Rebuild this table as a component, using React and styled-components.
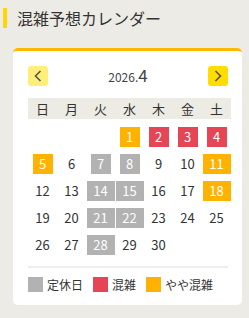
import styled, { createGlobalStyle } from "styled-components";

const GlobalStyle = createGlobalStyle`
  body {
    margin: 0;
    background: #edebe6;
    font-family: "Noto Sans CJK JP", "Noto Sans", sans-serif;
    color: #333;
  }
`;

const WEEK = ["日", "月", "火", "水", "木", "金", "土"];

// status: c = closed, b = busy, m = moderately busy
const STATUS = {
  1: "m", 2: "b", 3: "b", 4: "b",
  5: "m", 7: "c", 8: "c", 11: "m",
  14: "c", 15: "c", 18: "m",
  21: "c", 22: "c", 28: "c",
};

const COLORS = {
  c: "#b2b2b2",
  b: "#e64556",
  m: "#ffb300",
};

const FIRST_WEEKDAY = 3;
const DAYS = 30;

const Calendar = () => {
  const cells = [];
  for (let i = 0; i < FIRST_WEEKDAY; i++) cells.push(null);
  for (let d = 1; d <= DAYS; d++) cells.push(d);

  return (
    <>
      <GlobalStyle />
      <Title>混雑予想カレンダー</Title>
      <Card>
        <Nav>
          <NavButton $strong={false} aria-label="prev">
            <svg width="8" height="12" viewBox="0 0 8 12">
              <path d="M6.5 1 L1.5 6 L6.5 11" fill="none" stroke="#555" strokeWidth="1.6" />
            </svg>
          </NavButton>
          <Month>
            <Year>2026.</Year>4
          </Month>
          <NavButton $strong aria-label="next">
            <svg width="8" height="12" viewBox="0 0 8 12">
              <path d="M1.5 1 L6.5 6 L1.5 11" fill="none" stroke="#555" strokeWidth="1.6" />
            </svg>
          </NavButton>
        </Nav>
        <WeekRow>
          {WEEK.map((w) => (
            <WeekCell key={w}>{w}</WeekCell>
          ))}
        </WeekRow>
        <Days>
          {cells.map((d, i) => (
            <DayCell key={i}>
              {d && (
                <Day $bg={COLORS[STATUS[d]]} $wide={d > 9}>
                  {d}
                </Day>
              )}
            </DayCell>
          ))}
        </Days>
        <Divider />
        <Legend>
          <LegendItem>
            <Swatch $bg={COLORS.c} />定休日
          </LegendItem>
          <LegendItem>
            <Swatch $bg={COLORS.b} />混雑
          </LegendItem>
          <LegendItem>
            <Swatch $bg={COLORS.m} />やや混雑
          </LegendItem>
        </Legend>
      </Card>
    </>
  );
};

const Title = styled.h2`
  margin: 8px 0 0 3px;
  padding-left: 10px;
  border-left: 4px solid #ffd600;
  height: 20px;
  line-height: 20px;
  font-size: 16px;
  font-weight: normal;
  color: #333;
`;

const Card = styled.div`
  margin: 20px 7px 0 13px;
  background: #fff;
  border-top: 3px solid #ffb800;
  border-radius: 5px;
  padding: 15px 11px 13px 15px;
`;

const Nav = styled.div`
  display: flex;
  align-items: flex-end;
  justify-content: space-between;
  width: 200px;
  height: 20px;
  margin-bottom: 12px;
`;

const NavButton = styled.button`
  display: flex;
  align-items: center;
  justify-content: center;
  width: 20px;
  height: 20px;
  padding: 0;
  border: none;
  border-radius: 3px;
  background: ${(p) => (p.$strong ? "#ffdd00" : "#ffee77")};
`;

const Month = styled.div`
  font-size: 17px;
  line-height: 17px;
  color: #444;
  margin-bottom: 1px;
`;

const Year = styled.span`
  font-size: 12px;
`;

const WeekRow = styled.div`
  display: grid;
  grid-template-columns: repeat(7, 29px);
  height: 21px;
  background: #ecebe4;
`;

const WeekCell = styled.div`
  text-align: center;
  font-size: 13px;
  line-height: 21px;
  color: #333;
`;

const Days = styled.div`
  display: grid;
  grid-template-columns: repeat(7, 29px);
  grid-auto-rows: 20px;
  row-gap: 7px;
  padding-top: 8px;
`;

const DayCell = styled.div`
  display: flex;
  justify-content: center;
`;

const Day = styled.span`
  display: block;
  width: ${(p) => (p.$wide ? "28px" : "20px")};
  height: 20px;
  line-height: 20px;
  text-align: center;
  font-size: 13px;
  background: ${(p) => p.$bg || "transparent"};
  color: ${(p) => (p.$bg ? "#fff" : "#333")};
`;

const Divider = styled.div`
  margin-top: 11px;
  width: 200px;
  border-top: 2px solid #efeeea;
`;

const Legend = styled.div`
  display: flex;
  padding-top: 9px;
`;

const LegendItem = styled.div`
  display: flex;
  align-items: center;
  gap: 4px;
  margin-right: 10px;
  font-size: 12px;
  line-height: 15px;
  color: #333;
`;

const Swatch = styled.span`
  display: block;
  width: 15px;
  height: 15px;
  background: ${(p) => p.$bg};
`;

export default Calendar;
